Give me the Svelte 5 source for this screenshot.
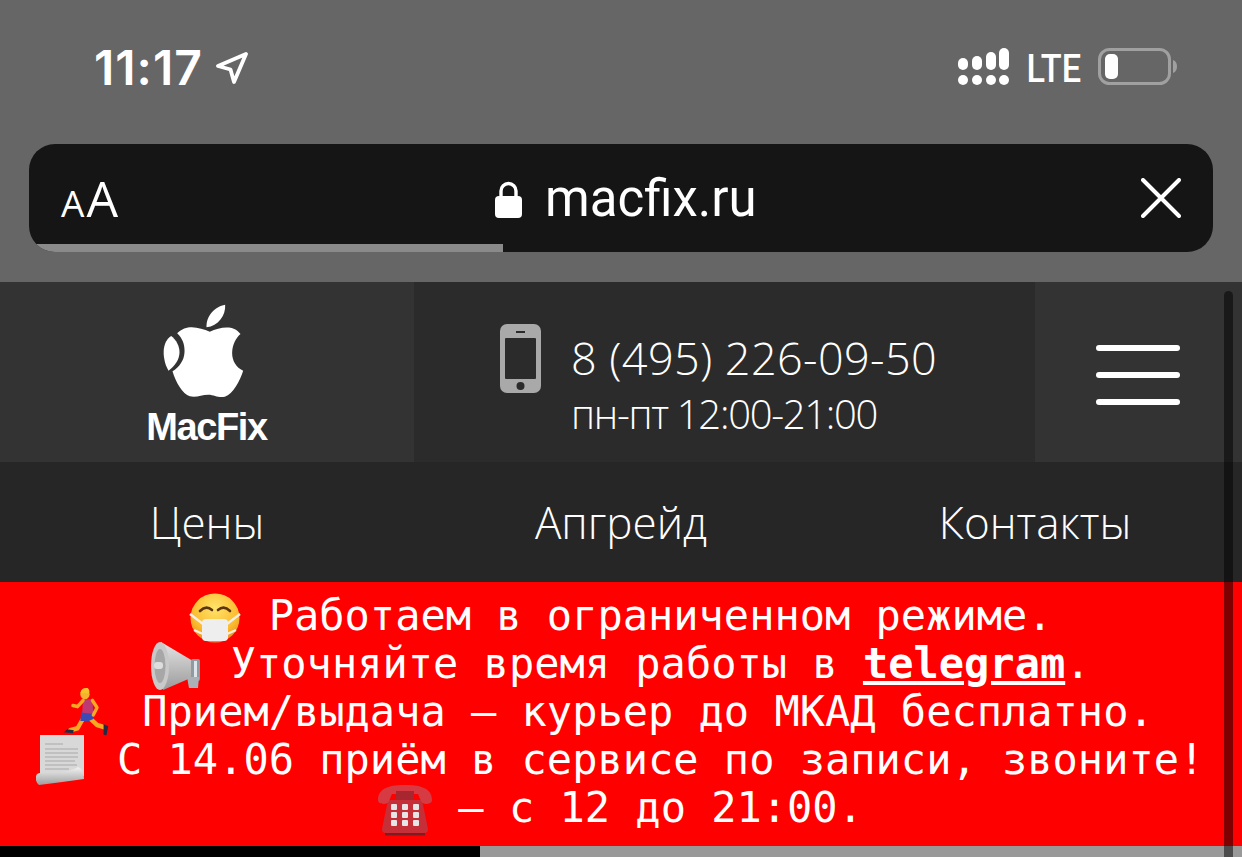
<script>
  const nav = ['Цены', 'Апгрейд', 'Контакты'];
</script>

<div class="page">
  <div class="status">
    <div class="clock">
      <span class="time">11:17</span>
      <svg class="arrow" viewBox="0 0 32 32"><path d="M30 2 L2 14 L14.5 17.5 L18 30 Z" fill="none" stroke="#fff" stroke-width="3.8" stroke-linejoin="round"/></svg>
    </div>
    <div class="radio">
      <svg class="signal" viewBox="0 0 51 37" fill="#fff">
        <rect x="0" y="10" width="10" height="12" rx="5"/>
        <rect x="14" y="8" width="10" height="14" rx="5"/>
        <rect x="28" y="4" width="10" height="18" rx="5"/>
        <rect x="41" y="0" width="10" height="22" rx="5"/>
        <rect x="0" y="27" width="10" height="10" rx="5"/>
        <rect x="14" y="27" width="10" height="10" rx="5"/>
        <rect x="28" y="27" width="10" height="10" rx="5"/>
        <rect x="41" y="27" width="10" height="10" rx="5"/>
      </svg>
      <span class="lte">LTE</span>
      <svg class="battery" viewBox="0 0 80 38">
        <rect x="1.5" y="1.5" width="70" height="34" rx="10" fill="none" stroke="#a0a0a0" stroke-width="3"/>
        <rect x="7" y="6" width="13" height="25" rx="5" fill="#fff"/>
        <path d="M75 12 C78 13 79 16 79 18.5 C79 21 78 24 75 25 Z" fill="#a0a0a0"/>
      </svg>
    </div>
  </div>

  <div class="urlbar">
    <span class="aa"><small>A</small>A</span>
    <span class="host">
      <svg class="lock" viewBox="0 0 27 37"><path d="M6 17 V10 a7.5 7.5 0 0 1 15 0 V17" fill="none" stroke="#fff" stroke-width="3.4"/><rect x="0" y="15" width="27" height="22" rx="4" fill="#fff"/></svg>
      macfix.ru
    </span>
    <svg class="close" viewBox="0 0 40 40"><path d="M2 2 L38 38 M38 2 L2 38" stroke="#fff" stroke-width="4" stroke-linecap="round"/></svg>
    <div class="progress"></div>
  </div>

  <header class="head">
    <div class="logo">
      <svg class="apple" viewBox="190 70 242 282" fill="#fff">
        <path d="M320 140 C318 105 345 78 376 72 C378 105 355 135 320 140 Z"/>
        <path d="M330 153 C300 142 262 128 232 158 C250 175 255 195 254 215 C253 240 238 260 218 272 C228 305 248 340 270 347 C290 352 305 342 325 342 C345 342 355 353 375 348 C400 340 420 300 430 270 C408 260 396 238 397 215 C398 192 408 172 422 160 C400 130 360 140 330 153 Z"/>
        <path d="M214 166 C230 178 239 197 239 215 C239 236 226 256 206 270 C194 250 190 225 192 205 C194 188 202 174 214 166 Z"/>
      </svg>
      <span class="brand">MacFix</span>
    </div>
    <div class="contact">
      <svg class="phone" viewBox="0 0 41 69">
        <rect width="41" height="69" rx="7" fill="#a9a9a9"/>
        <rect x="5" y="14" width="31" height="41" rx="1" fill="#2b2b2b"/>
        <rect x="16" y="7" width="9" height="2" fill="#2b2b2b"/>
        <circle cx="20.5" cy="62" r="4" fill="#2b2b2b"/>
      </svg>
      <div class="contact-text">
        <div class="number">8 (495) 226-09-50</div>
        <div class="hours">пн-пт 12:00-21:00</div>
      </div>
    </div>
    <div class="burger"><i></i><i></i><i></i></div>
  </header>

  <nav class="nav">
    {#each nav as item}
      <span>{item}</span>
    {/each}
  </nav>

  <section class="notice">
    <div>
      <svg class="emoji" viewBox="0 0 56 56">
        <defs>
          <radialGradient id="face" cx="50%" cy="30%" r="75%"><stop offset="0" stop-color="#ffe36a"/><stop offset="0.65" stop-color="#fbbb2e"/><stop offset="1" stop-color="#e8861a"/></radialGradient>
        </defs>
        <circle cx="28" cy="27" r="24.5" fill="url(#face)"/>
        <path d="M13 20 Q19 14 25 19 M31 19 Q37 14 43 20" fill="none" stroke="#5a3510" stroke-width="2.6" stroke-linecap="round"/>
        <path d="M3 23 L16 33 M53 23 L40 33 M7 39 L16 43 M49 39 L40 43" stroke="#f4efe6" stroke-width="2.4"/>
        <rect x="15" y="28" width="26" height="22" rx="4" fill="#eeeeee"/>
      </svg>
      Работаем в ограниченном режиме.
    </div>
    <div>
      <svg class="emoji" viewBox="0 0 56 56">
        <defs>
          <linearGradient id="horn" x1="0" y1="0" x2="0" y2="1"><stop offset="0" stop-color="#e4e4e4"/><stop offset="1" stop-color="#9b9b9b"/></linearGradient>
        </defs>
        <path d="M12 3 L44 22 L44 38 L14 51 Z" fill="url(#horn)"/>
        <ellipse cx="11" cy="27" rx="9" ry="24" fill="#c9c9c9"/>
        <ellipse cx="11" cy="27" rx="5.5" ry="17" fill="#a7a7a7"/>
        <rect x="5" y="23" width="9" height="7" rx="3" fill="#dedede"/>
        <rect x="42" y="20" width="9" height="22" rx="2" fill="#8f9aa3"/>
        <rect x="45" y="22" width="3" height="18" fill="#dfe4e8"/>
        <path d="M38 38 L50 38 L49 49 L40 49 Z" fill="#aab0b5"/>
      </svg>
      Уточняйте время работы в <a href="#top" class="tg">telegram</a>.
    </div>
    <div>
      <svg class="emoji" viewBox="0 0 56 56">
        <g transform="translate(-3 0) scale(0.93 1.03)">
          <path d="M28 29 L21 40 L13 42" fill="none" stroke="#f7a823" stroke-width="4.5" stroke-linejoin="round" stroke-linecap="round"/>
          <path d="M34 30 L42 37 L50 39" fill="none" stroke="#f7a823" stroke-width="4.5" stroke-linejoin="round" stroke-linecap="round"/>
          <path d="M10 41 L17 42 L16 45 L6 44 Z" fill="#222a44"/>
          <path d="M49 36 L54 38 L52 47 L49 46 Z" fill="#222a44"/>
          <path d="M25 24 L38 26 L38 31 L33 33 L24 33 Z" fill="#3b4bb5"/>
          <path d="M27 12 L37 12 L38 26 L26 25 Z" fill="#bd3a74"/>
          <path d="M27 13 L21 19 L16 18" fill="none" stroke="#f7a823" stroke-width="3.5" stroke-linecap="round" stroke-linejoin="round"/>
          <path d="M37 13 L42 20 L38 27" fill="none" stroke="#f7a823" stroke-width="3.5" stroke-linecap="round" stroke-linejoin="round"/>
          <circle cx="29" cy="7" r="5" fill="#f7b02f"/>
          <path d="M24 6 Q25 0 32 1 Q35 4 33 6 Z" fill="#f6c22c"/>
        </g>
      </svg>
      Прием/выдача — курьер до МКАД бесплатно.&nbsp;
    </div>
    <div>
      <svg class="emoji" viewBox="0 0 56 56">
        <defs>
          <linearGradient id="roll" x1="0" y1="0" x2="0" y2="1"><stop offset="0" stop-color="#f2f2f2"/><stop offset="1" stop-color="#9e9e9e"/></linearGradient>
        </defs>
        <g transform="translate(-3 -3)">
          <rect x="7" y="2" width="44" height="42" fill="#d8d8d8"/>
          <path d="M12 12 H30 M12 17 H45 M12 21 H45 M12 25 H45 M12 29 H42 M12 33 H44 M12 37 H36" stroke="#a8a8a8" stroke-width="1"/>
          <path d="M3 44 Q4 40 12 41 Q35 41 45 35 Q51 37 51 47 Q30 50 6 53 Q2 50 3 44 Z" fill="url(#roll)"/>
        </g>
      </svg>
      С 14.06 приём в сервисе по записи, звоните!
    </div>
    <div>
      <svg class="emoji" viewBox="0 0 56 56">
        <path d="M11 17 L45 17 L51 46 Q51 50 47 50 L9 50 Q5 50 5 46 Z" fill="#c42f38"/>
        <path d="M1 17 C1 4 15 2 28 2 C41 2 55 4 55 17 C55 22 45 22 44 18 L41 11 L15 11 L12 18 C11 22 1 22 1 17 Z" fill="#d63a42"/>
        <rect x="19" y="8" width="18" height="9" fill="#a82630"/>
        <g fill="#e6e6e6">
          <rect x="14" y="21" width="6" height="6" rx="1"/><rect x="25" y="21" width="6" height="6" rx="1"/><rect x="36" y="21" width="6" height="6" rx="1"/>
          <rect x="14" y="29" width="6" height="6" rx="1"/><rect x="25" y="29" width="6" height="6" rx="1"/><rect x="36" y="29" width="6" height="6" rx="1"/>
          <rect x="14" y="37" width="6" height="6" rx="1"/><rect x="25" y="37" width="6" height="6" rx="1"/><rect x="36" y="37" width="6" height="6" rx="1"/>
        </g>
        <rect x="8" y="50" width="40" height="2.5" fill="#7c1c22"/>
      </svg>
      — с 12 до 21:00.
    </div>
  </section>

  <div class="below"><span class="dark"></span><span class="light"></span></div>
  <div class="scrollbar"></div>
</div>

<style>
  :global(body) {
    margin: 0;
    background: #666;
  }

  .page {
    position: relative;
    height: 857px;
    overflow: hidden;
    background: #666;
    font-family: Inter, sans-serif;
    color: #fff;
  }

  .status {
    height: 144px;
    display: flex;
    justify-content: space-between;
    padding: 48px 64px 0 94px;
    box-sizing: border-box;
  }

  .clock {
    display: flex;
    align-items: flex-start;
    gap: 13px;
  }

  .time {
    font-size: 48px;
    font-weight: 600;
    line-height: 40px;
    letter-spacing: 1px;
  }

  .arrow {
    width: 32px;
    height: 32px;
    margin-top: 4px;
  }

  .radio {
    display: flex;
    align-items: flex-start;
    gap: 17px;
  }

  .signal {
    width: 51px;
    height: 37px;
  }

  .lte {
    font-family: Roboto, sans-serif;
    font-size: 39px;
    font-weight: 500;
    line-height: 37px;
    margin: 3px 0 0 -7px;
    transform: scaleX(0.88);
    transform-origin: right center;
  }

  .battery {
    width: 80px;
    height: 38px;
    margin-top: 0;
  }

  .urlbar {
    position: relative;
    height: 108px;
    margin: 0 29px 30px;
    background: #151515;
    border-radius: 26px;
    overflow: hidden;
    display: flex;
    align-items: center;
    justify-content: space-between;
    padding: 0 32px 0 32px;
  }

  .aa {
    font-family: "Open Sans", sans-serif;
    font-size: 50px;
    font-weight: 400;
    line-height: 1;
  }

  .aa small {
    font-size: 37px;
    margin-right: 2px;
  }

  .host {
    position: absolute;
    left: 466px;
    top: 35px;
    display: flex;
    align-items: center;
    gap: 23px;
    font-family: Roboto, sans-serif;
    font-size: 51px;
    line-height: 40px;
  }

  .lock {
    width: 27px;
    height: 37px;
  }

  .close {
    width: 40px;
    height: 40px;
  }

  .progress {
    position: absolute;
    left: 0;
    bottom: 0;
    width: 474px;
    height: 8px;
    background: #8a8a8a;
  }

  .head {
    display: grid;
    grid-template-columns: 414px 621px 207px;
    height: 180px;
  }

  .logo {
    background: #333;
    display: flex;
    flex-direction: column;
    align-items: center;
    padding-top: 22px;
    box-sizing: border-box;
  }

  .apple {
    width: 81px;
    height: 94px;
    margin-right: 7px;
  }

  .brand {
    font-family: "Liberation Sans", sans-serif;
    font-weight: 700;
    font-size: 38px;
    line-height: 34px;
    letter-spacing: -1.4px;
    margin-top: 12px;
    margin-right: 1px;
  }

  .contact {
    background: #2b2b2b;
    display: flex;
    padding: 42px 0 0 86px;
    gap: 31px;
    box-sizing: border-box;
  }

  .phone {
    width: 41px;
    height: 69px;
  }

  .number {
    font-family: "Open Sans", sans-serif;
    font-weight: 300;
    font-size: 45px;
    line-height: 50px;
    letter-spacing: 0.4px;
    margin-top: 9px;
    margin-left: -1px;
  }

  .hours {
    font-family: "Open Sans", sans-serif;
    font-weight: 300;
    font-size: 40px;
    line-height: 44px;
    letter-spacing: -1.3px;
    margin-top: 9px;
    margin-left: -1px;
  }

  .burger {
    background: #333;
    display: flex;
    flex-direction: column;
    gap: 21px;
    padding: 63px 0 0 61px;
    box-sizing: border-box;
  }

  .burger i {
    display: block;
    width: 84px;
    height: 6px;
    border-radius: 3px;
    background: #fff;
  }

  .nav {
    height: 120px;
    display: grid;
    grid-template-columns: repeat(3, 1fr);
    align-items: center;
    text-align: center;
    background: #262626;
    font-family: "Open Sans", sans-serif;
    font-weight: 300;
    font-size: 44px;
  }

  .notice {
    height: 264px;
    padding: 10px 2px 12px 0;
    box-sizing: border-box;
    background: #f00;
    text-align: center;
    font-family: "DejaVu Sans Mono", monospace;
    font-size: 42px;
    line-height: 48px;
  }

  .emoji {
    display: inline-block;
    width: 56px;
    height: 56px;
    margin: -26px 0;
    vertical-align: 9px;
  }

  .tg {
    color: #fff;
    font-weight: 700;
    text-decoration: underline;
  }

  .below {
    display: flex;
    height: 11px;
  }

  .dark {
    width: 480px;
    background: #000;
  }

  .light {
    flex: 1;
    background: #999;
  }

  .scrollbar {
    position: absolute;
    left: 1224px;
    top: 291px;
    bottom: 0;
    width: 9px;
    border-radius: 4.5px 4.5px 0 0;
    background: rgba(0, 0, 0, 0.5);
  }
</style>
